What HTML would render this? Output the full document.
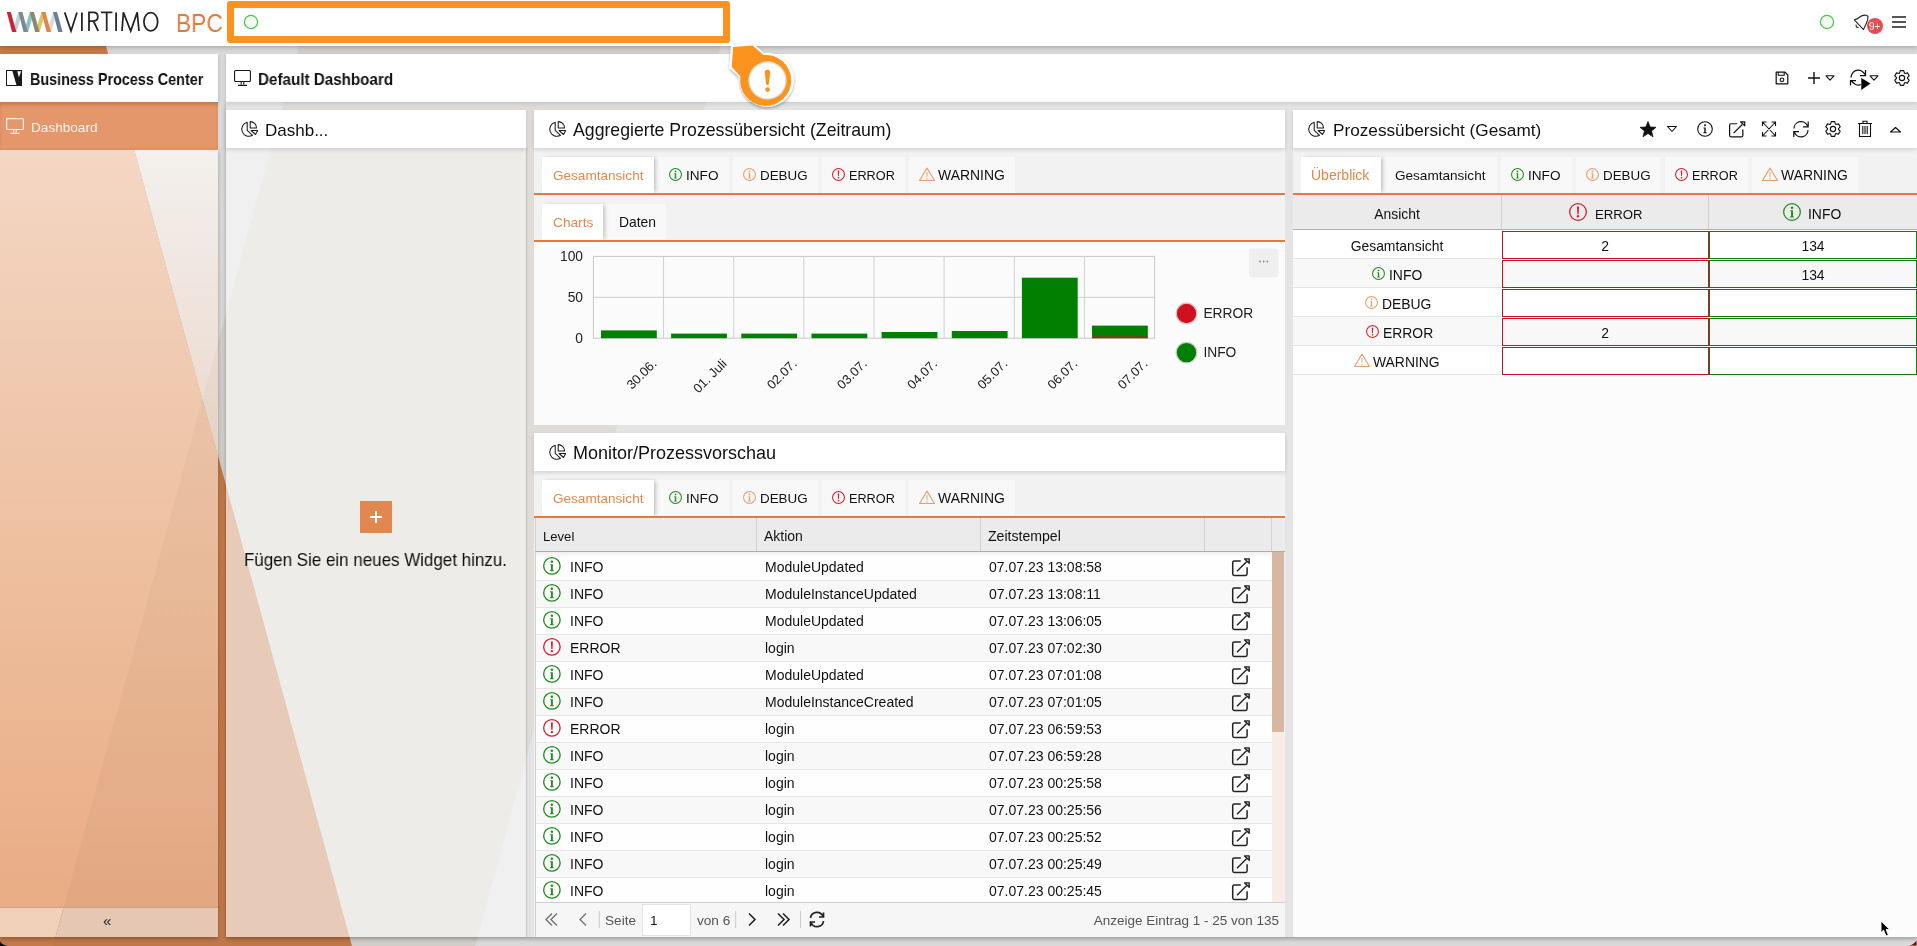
<!DOCTYPE html>
<html><head><meta charset="utf-8">
<style>
*{box-sizing:border-box;margin:0;padding:0}
html,body{width:1917px;height:946px;overflow:hidden;font-family:"Liberation Sans",sans-serif;color:#1a1a1a;background:#d9d9d9;-webkit-font-smoothing:antialiased}
.abs{position:absolute}
.t{position:absolute;white-space:nowrap;line-height:1;will-change:transform}
svg{display:block}
</style></head><body>
<svg class="abs" style="left:0;top:0" width="1917" height="946" viewBox="0 0 1917 946">
  <rect width="1917" height="946" fill="#d9d9d9"/>
  <polygon points="0,0 93.4,0 352,946 0,946" fill="#c67a4a"/>
  <polygon points="311.6,0 733.6,0 475,946 53,946" fill="rgb(150,110,60)" fill-opacity="0.1"/>
</svg>
<svg class="abs" style="left:0;top:0" width="218" height="946" viewBox="0 0 218 946">
  <defs>
    <linearGradient id="sgO" x1="0" y1="150" x2="0" y2="907" gradientUnits="userSpaceOnUse">
      <stop offset="0" stop-color="#f4d7c4"/>
      <stop offset="0.26" stop-color="#f0cbb3"/>
      <stop offset="0.55" stop-color="#eebf9e"/>
      <stop offset="1" stop-color="#e9ac85"/>
    </linearGradient>
    <linearGradient id="sgN" x1="0" y1="150" x2="0" y2="456" gradientUnits="userSpaceOnUse">
      <stop offset="0" stop-color="#f3f0ed"/>
      <stop offset="1" stop-color="#ebd8cc"/>
    </linearGradient>
  </defs>
  <polygon points="0,150 134.4,150 218,455.9 218,907 0,907" fill="url(#sgO)"/>
  <polygon points="134.4,150 218,150 218,455.9" fill="url(#sgN)"/>
  <polygon points="218,342.4 218,907 63.7,907" fill="rgb(90,60,30)" fill-opacity="0.035"/>
  <polygon points="0,907 63.7,907 55.5,937 0,937" fill="#f2d1ba"/>
  <polygon points="63.7,907 218,907 218,937 55.5,937" fill="#e5c7b3"/>
  <rect x="0" y="907" width="218" height="1" fill="#c9a58c"/>
</svg>
<div class="t" style="left:102.5px;top:913px;font-size:15px;color:#222;font-weight:normal;">&laquo;</div>
<div class="abs" style="left:0px;top:0px;width:1917px;height:46px;background:#fff;box-shadow:0 1px 5px rgba(0,0,0,.28)"></div>
<svg class="abs" style="left:0px;top:0px;overflow:visible" width="70" height="46" viewBox="0 0 70 46"><polygon points="12.10,32 16.50,32 22.55,12 18.35,12" fill="#bcd2d8"/><polygon points="23.65,32 28.05,32 34.10,12 29.90,12" fill="#8cc4c4"/><polygon points="35.20,32 39.60,32 45.65,12 41.45,12" fill="#d8c868"/><polygon points="46.75,32 51.15,32 57.20,12 53.00,12" fill="#dcdad4"/><polygon points="6.80,12 10.80,12 16.40,32 12.00,32" fill="#c8243a"/><polygon points="18.35,12 22.35,12 27.95,32 23.55,32" fill="#7a8a98"/><polygon points="29.90,12 33.90,12 39.50,32 35.10,32" fill="#8a8870"/><polygon points="41.45,12 45.45,12 51.05,32 46.65,32" fill="#e0884a"/><polygon points="53.00,12 57.00,12 62.60,32 58.20,32" fill="#6a7f9a"/></svg>
<svg class="abs" style="left:0px;top:0px;overflow:visible" width="170" height="46" viewBox="0 0 170 46"><path d="M64.7 12.4 L71 31 L77 12.4 M81.9 12.4 V31 M89 31 V12.4 H93.5 Q97.8 12.4 97.8 16.8 Q97.8 21 93.5 21 H89 M93.4 21 L98.3 31 M101 12.4 H112.4 M106.7 12.4 V31 M116.1 12.4 V31 M122 31 L123.4 12.4 L130.7 31 L137.2 12.4 L139 31" fill="none" stroke="#232323" stroke-width="1.75" stroke-linejoin="miter"/><ellipse cx="150.8" cy="21.7" rx="6.9" ry="9.2" fill="none" stroke="#232323" stroke-width="1.75"/></svg>
<div class="t" style="left:175.5px;top:10px;font-size:26px;color:#df7b3d;font-weight:normal;transform:scaleX(0.875);transform-origin:0 0">BPC</div>
<div class="abs" style="left:227px;top:1px;width:503px;height:42px;border:7px solid #fd931f;border-radius:3px;background:#fff"></div>
<svg class="abs" style="left:243px;top:14px;overflow:visible" width="16" height="16" viewBox="0 0 16 16"><circle cx="8" cy="8" r="7.5" fill="#5c5" fill-opacity="0.08"/><circle cx="8" cy="8" r="6.6" fill="none" stroke="#4cc34c" stroke-width="1.2"/></svg>
<svg class="abs" style="left:1819px;top:14px;overflow:visible" width="16" height="16" viewBox="0 0 16 16"><circle cx="8" cy="8" r="7.5" fill="#5c5" fill-opacity="0.08"/><circle cx="8" cy="8" r="6.6" fill="none" stroke="#4cc34c" stroke-width="1.2"/></svg>
<svg class="abs" style="left:1853px;top:14px;overflow:visible" width="18" height="18" viewBox="0 0 18 18"><path d="M1.3 5.8 Q4 5.4 6.8 3 Q9.8 0.6 13 1.2 L15 2.2 Q15.2 6 13.2 9.8 Q11.6 12.8 10.5 15.6 Z" fill="none" stroke="#222" stroke-width="1.1" stroke-linejoin="round"/><path d="M3.2 10.6 Q2.6 13.4 5.6 13.8" fill="none" stroke="#222" stroke-width="1.1"/></svg>
<svg class="abs" style="left:1867px;top:18px;overflow:visible" width="16" height="16" viewBox="0 0 16 16"><circle cx="8" cy="8" r="8" fill="#e84c52"/></svg>
<div class="t" style="left:1868.5px;top:22px;font-size:10px;color:#fff;font-weight:normal;">9+</div>
<div class="abs" style="left:1892px;top:16px;width:14px;height:2px;background:#555"></div>
<div class="abs" style="left:1892px;top:21px;width:14px;height:2px;background:#555"></div>
<div class="abs" style="left:1892px;top:26px;width:14px;height:2px;background:#555"></div>
<div class="abs" style="left:0px;top:54px;width:218px;height:48px;background:#fff;box-shadow:0 2px 4px rgba(0,0,0,.16)"></div>
<div class="abs" style="left:226px;top:54px;width:1691px;height:48px;background:#fff;box-shadow:0 2px 4px rgba(0,0,0,.16)"></div>
<svg class="abs" style="left:6px;top:70px;overflow:visible" width="16" height="16" viewBox="0 0 16 16"><rect x="0.5" y="0.5" width="15" height="15" fill="none" stroke="#1a1a1a" stroke-width="1"/><path d="M6.2 0.5 H15.5 V15.5 H10.6 Z M11.3 1.3 L15.1 1.3 L12.9 7.6 Z" fill="#1a1a1a" fill-rule="evenodd"/></svg>
<div class="t" style="left:30.4px;top:72px;font-size:16.6px;color:#111;font-weight:bold;transform:scaleX(0.866);transform-origin:0 0">Business Process Center</div>
<svg class="abs" style="left:234px;top:70px;overflow:visible" width="17" height="16" viewBox="0 0 17 16"><rect x="0.55" y="0.55" width="15.9" height="10.88" rx="1" fill="none" stroke="#1a1a1a" stroke-width="1.1"/><path d="M7.2 11.98 V14.5 M9.8 11.98 V14.5 M4.0 15.4 H13.0" stroke="#1a1a1a" stroke-width="1.1" fill="none"/></svg>
<div class="t" style="left:258.4px;top:72px;font-size:16.0px;color:#111;font-weight:bold;transform:scaleX(0.95);transform-origin:0 0">Default Dashboard</div>
<svg class="abs" style="left:1775px;top:71px;overflow:visible" width="14" height="14" viewBox="0 0 14 14"><path d="M1.2 1.2 H10 L12.8 4 V12.8 H1.2 Z" fill="none" stroke="#111" stroke-width="1.2" stroke-linejoin="round"/><path d="M3.2 1.2 V4.2 H9.2 V1.2" fill="none" stroke="#111" stroke-width="1.1"/><circle cx="7" cy="8.8" r="1.8" fill="none" stroke="#111" stroke-width="1.1"/></svg>
<svg class="abs" style="left:1808px;top:72px;overflow:visible" width="12" height="12" viewBox="0 0 12 12"><path d="M6 0 V12 M0 6 H12" stroke="#111" stroke-width="1.4"/></svg>
<svg class="abs" style="left:1825px;top:75px;overflow:visible" width="10" height="6" viewBox="0 0 10 6"><path d="M1 0.8 H9 L5 5.2 Z" fill="none" stroke="#111" stroke-width="1.1" stroke-linejoin="round"/></svg>
<svg class="abs" style="left:1850px;top:70px;overflow:visible" width="16" height="16" viewBox="0 0 16 16"><path d="M0.8 7.5 Q2.5 0.5 8 0.2 Q12 0 15 4.5 M15.5 0 V5.5 H10 M12 14 Q8.5 16 5.5 14.5 Q3 13 1 10.5 M0.5 15.5 V10.5 H6" fill="none" stroke="#111" stroke-width="1.25"/></svg>
<svg class="abs" style="left:1869px;top:75px;overflow:visible" width="10" height="6" viewBox="0 0 10 6"><path d="M1 0.8 H9 L5 5.2 Z" fill="none" stroke="#111" stroke-width="1.1" stroke-linejoin="round"/></svg>
<svg class="abs" style="left:1860px;top:77px;overflow:visible" width="12" height="14" viewBox="0 0 12 14"><path d="M1 0.5 L11 6.5 L1 13.5 Z" fill="#000" stroke="#fff" stroke-width="0.6"/></svg>
<svg class="abs" style="left:1894px;top:70px;overflow:visible" width="16" height="16" viewBox="0 0 16 16"><path d="M5.59 3.06 L6.31 0.69 L9.69 0.69 L10.41 3.06 L11.08 3.44 L13.49 2.89 L15.17 5.81 L13.49 7.62 L13.49 8.38 L15.17 10.19 L13.49 13.11 L11.08 12.56 L10.41 12.94 L9.69 15.31 L6.31 15.31 L5.59 12.94 L4.92 12.56 L2.51 13.11 L0.83 10.19 L2.51 8.38 L2.51 7.62 L0.83 5.81 L2.51 2.89 L4.92 3.44 Z" fill="none" stroke="#111" stroke-width="1.15" stroke-linejoin="round"/><circle cx="8.0" cy="8.0" r="2.64" fill="none" stroke="#111" stroke-width="1.15"/></svg>
<div class="abs" style="left:0px;top:102px;width:218px;height:48px;background:#e3976a;box-shadow:inset 0 4px 4px -2px rgba(110,50,10,.35)"></div>
<svg class="abs" style="left:6px;top:118px;overflow:visible" width="18" height="16" viewBox="0 0 18 16"><rect x="0.6" y="0.6" width="16.8" height="10.88" rx="1" fill="none" stroke="#fdf3ec" stroke-width="1.2"/><path d="M7.7 12.08 V14.5 M10.3 12.08 V14.5 M4.5 15.4 H13.5" stroke="#fdf3ec" stroke-width="1.2" fill="none"/></svg>
<div class="t" style="left:30.5px;top:121px;font-size:13.6px;color:#fdf3ec;font-weight:normal;">Dashboard</div>
<div class="abs" style="left:226px;top:102px;width:1691px;height:835px;background:rgba(255,255,255,.3);box-shadow:0 2px 4px rgba(0,0,0,.28)"></div>
<div class="abs" style="left:0px;top:150px;width:218px;height:787px;box-shadow:0 2px 4px rgba(0,0,0,.28)"></div>
<div class="abs" style="left:226px;top:148px;width:300px;height:789px;background:rgba(255,255,255,.45);box-shadow:1px 0 1px rgba(0,0,0,.12)"></div>
<div class="abs" style="left:226px;top:110px;width:300px;height:38px;background:#fff;box-shadow:0 2px 4px rgba(0,0,0,.13);z-index:1"></div>
<svg class="abs" style="z-index:2;left:241px;top:121px;overflow:visible" width="17" height="16" viewBox="0 0 17 16"><path d="M6.2 1.3 A7.1 7.1 0 1 0 11.5 14.3 L6.2 9.3 Z" fill="none" stroke="#1a1a1a" stroke-width="1.05" stroke-linejoin="round"/><path d="M9.2 0.6 V6.9 H15.5 A6.3 6.3 0 0 0 9.2 0.6 Z" fill="none" stroke="#1a1a1a" stroke-width="1.05" stroke-linejoin="round"/><path d="M10.1 9.5 H16.7 L14.5 13.5 Z" fill="none" stroke="#1a1a1a" stroke-width="1.05" stroke-linejoin="round"/></svg>
<div class="t" style="z-index:2;left:265.2px;top:122px;font-size:17.0px;color:#111;font-weight:normal;">Dashb...</div>
<div class="abs" style="left:360px;top:501px;width:32px;height:32px;background:#e0884f"></div>
<div class="abs" style="left:370px;top:516px;width:12px;height:1.6px;background:#fff"></div>
<div class="abs" style="left:375.2px;top:511px;width:1.6px;height:12px;background:#fff"></div>
<div class="t" style="left:244.0px;top:551px;font-size:18.2px;color:#111;font-weight:normal;transform:scaleX(0.932);transform-origin:0 0">Fügen Sie ein neues Widget hinzu.</div>
<div class="abs" style="left:534px;top:148px;width:751px;height:277px;background:#f2f2f2"></div>
<div class="abs" style="left:534px;top:110px;width:751px;height:38px;background:#fff;box-shadow:0 2px 4px rgba(0,0,0,.13);z-index:1"></div>
<svg class="abs" style="z-index:2;left:549px;top:121px;overflow:visible" width="17" height="16" viewBox="0 0 17 16"><path d="M6.2 1.3 A7.1 7.1 0 1 0 11.5 14.3 L6.2 9.3 Z" fill="none" stroke="#1a1a1a" stroke-width="1.05" stroke-linejoin="round"/><path d="M9.2 0.6 V6.9 H15.5 A6.3 6.3 0 0 0 9.2 0.6 Z" fill="none" stroke="#1a1a1a" stroke-width="1.05" stroke-linejoin="round"/><path d="M10.1 9.5 H16.7 L14.5 13.5 Z" fill="none" stroke="#1a1a1a" stroke-width="1.05" stroke-linejoin="round"/></svg>
<div class="t" style="z-index:2;left:573.4px;top:122px;font-size:17.7px;color:#111;font-weight:normal;">Aggregierte Prozessübersicht (Zeitraum)</div>
<div class="abs" style="left:534px;top:148px;width:751px;height:45px;background:#f2f2f2"></div>
<div class="abs" style="left:542px;top:157px;width:112px;height:36px;background:#fff;box-shadow:3px 0 4px -1px rgba(0,0,0,.2);z-index:1"></div>
<div class="t" style="z-index:2;left:552.5px;top:169px;font-size:13.57px;color:#e0884f;font-weight:normal;">Gesamtansicht</div>
<div class="abs" style="left:655px;top:157px;width:74px;height:36px;background:#f8f8f8"></div>
<svg class="abs" style="left:668.5px;top:168px;overflow:visible" width="13" height="13" viewBox="0 0 13 13"><circle cx="6.5" cy="6.5" r="5.95" fill="none" stroke="#228b22" stroke-width="1.1"/><circle cx="6.5" cy="3.4" r="0.9" fill="#228b22"/><path d="M5.3 5.3 H7.2 V9.7 H7.8 V10.4 H5.1 V9.7 H5.8 V6.0 H5.3 Z" fill="#228b22"/></svg>
<div class="t" style="left:685.5px;top:169px;font-size:13.6px;color:#111;font-weight:normal;">INFO</div>
<div class="abs" style="left:733px;top:157px;width:85px;height:36px;background:#f8f8f8"></div>
<svg class="abs" style="left:743px;top:168px;overflow:visible" width="13" height="13" viewBox="0 0 13 13"><circle cx="6.5" cy="6.5" r="5.95" fill="none" stroke="#e0a070" stroke-width="1.1"/><circle cx="6.5" cy="3.4" r="0.9" fill="#e0a070"/><path d="M5.3 5.3 H7.2 V9.7 H7.8 V10.4 H5.1 V9.7 H5.8 V6.0 H5.3 Z" fill="#e0a070"/></svg>
<div class="t" style="left:760.0px;top:169px;font-size:13.4px;color:#111;font-weight:normal;">DEBUG</div>
<div class="abs" style="left:822px;top:157px;width:83px;height:36px;background:#f8f8f8"></div>
<svg class="abs" style="left:832px;top:168px;overflow:visible" width="13" height="13" viewBox="0 0 13 13"><circle cx="6.5" cy="6.5" r="5.95" fill="none" stroke="#d0202e" stroke-width="1.1"/><path d="M5.75 2.5 H7.25 L6.95 8.1 H6.05 Z" fill="#d0202e"/><circle cx="6.5" cy="9.6" r="0.85" fill="#d0202e"/></svg>
<div class="t" style="left:849.0px;top:170px;font-size:12.7px;color:#111;font-weight:normal;">ERROR</div>
<div class="abs" style="left:909px;top:157px;width:106px;height:36px;background:#f8f8f8"></div>
<svg class="abs" style="left:919px;top:167px;overflow:visible" width="16" height="14" viewBox="0 0 16 14"><path d="M8.0 1.1 L15.45 13.45 H0.55 Z" fill="none" stroke="#e0a070" stroke-width="1.1" stroke-linejoin="round"/><path d="M7.4 5.32 H8.6 L8.35 10.08 H7.65 Z" fill="#e0a070"/><circle cx="8.0" cy="11.76" r="0.7" fill="#e0a070"/></svg>
<div class="t" style="left:938.0px;top:169px;font-size:13.95px;color:#111;font-weight:normal;">WARNING</div>
<div class="abs" style="left:534px;top:193px;width:751px;height:2px;background:#e07b40;z-index:3"></div>
<div class="abs" style="left:542px;top:204px;width:61px;height:36px;background:#fff;box-shadow:3px 0 4px -1px rgba(0,0,0,.2);z-index:1"></div>
<div class="t" style="z-index:2;left:552.5px;top:216px;font-size:13.7px;color:#e0884f;font-weight:normal;">Charts</div>
<div class="abs" style="left:603px;top:204px;width:63px;height:36px;background:#f8f8f8"></div>
<div class="t" style="left:618.5px;top:216px;font-size:13.9px;color:#111;font-weight:normal;">Daten</div>
<div class="abs" style="left:534px;top:240px;width:751px;height:2px;background:#e07b40;z-index:3"></div>
<div class="abs" style="left:534px;top:242px;width:751px;height:183px;background:rgba(251,251,251,.96)"></div>
<svg class="abs" style="left:0;top:0" width="1917" height="946" viewBox="0 0 1917 946"><rect x="593.4" y="256.4" width="561.2" height="81.8" fill="none" stroke="#c8c8c8" stroke-width="1"/><line x1="663.55" y1="256.4" x2="663.55" y2="338.2" stroke="#d0d0d0" stroke-width="1"/><line x1="733.7" y1="256.4" x2="733.7" y2="338.2" stroke="#d0d0d0" stroke-width="1"/><line x1="803.85" y1="256.4" x2="803.85" y2="338.2" stroke="#d0d0d0" stroke-width="1"/><line x1="874.0" y1="256.4" x2="874.0" y2="338.2" stroke="#d0d0d0" stroke-width="1"/><line x1="944.15" y1="256.4" x2="944.15" y2="338.2" stroke="#d0d0d0" stroke-width="1"/><line x1="1014.3" y1="256.4" x2="1014.3" y2="338.2" stroke="#d0d0d0" stroke-width="1"/><line x1="1084.45" y1="256.4" x2="1084.45" y2="338.2" stroke="#d0d0d0" stroke-width="1"/><line x1="593.4" y1="297.29999999999995" x2="1154.6" y2="297.29999999999995" stroke="#d0d0d0" stroke-width="1"/><rect x="601.0" y="330.4" width="55.8" height="7.8" fill="#007f00"/><rect x="671.1" y="333.6" width="55.8" height="4.6" fill="#007f00"/><rect x="741.3" y="333.6" width="55.8" height="4.6" fill="#007f00"/><rect x="811.5" y="333.6" width="55.8" height="4.6" fill="#007f00"/><rect x="881.6" y="332.0" width="55.8" height="6.2" fill="#007f00"/><rect x="951.8" y="331.0" width="55.8" height="7.2" fill="#007f00"/><rect x="1021.9" y="277.7" width="55.8" height="60.5" fill="#007f00"/><rect x="1092.0" y="325.6" width="55.8" height="12.6" fill="#007f00"/><rect x="1092.0" y="336.6" width="55.8" height="1.6" fill="#d0101e"/><text x="0" y="0" transform="translate(657.5,364.5) rotate(-45)" text-anchor="end" font-family="Liberation Sans" font-size="13" fill="#222">30.06.</text><text x="0" y="0" transform="translate(727.6,364.5) rotate(-45)" text-anchor="end" font-family="Liberation Sans" font-size="13" fill="#222">01. Juli</text><text x="0" y="0" transform="translate(797.8,364.5) rotate(-45)" text-anchor="end" font-family="Liberation Sans" font-size="13" fill="#222">02.07.</text><text x="0" y="0" transform="translate(867.9,364.5) rotate(-45)" text-anchor="end" font-family="Liberation Sans" font-size="13" fill="#222">03.07.</text><text x="0" y="0" transform="translate(938.1,364.5) rotate(-45)" text-anchor="end" font-family="Liberation Sans" font-size="13" fill="#222">04.07.</text><text x="0" y="0" transform="translate(1008.2,364.5) rotate(-45)" text-anchor="end" font-family="Liberation Sans" font-size="13" fill="#222">05.07.</text><text x="0" y="0" transform="translate(1078.4,364.5) rotate(-45)" text-anchor="end" font-family="Liberation Sans" font-size="13" fill="#222">06.07.</text><text x="0" y="0" transform="translate(1148.5,364.5) rotate(-45)" text-anchor="end" font-family="Liberation Sans" font-size="13" fill="#222">07.07.</text><text x="583" y="261.3" text-anchor="end" font-family="Liberation Sans" font-size="13.8" fill="#222">100</text><text x="583" y="302" text-anchor="end" font-family="Liberation Sans" font-size="13.8" fill="#222">50</text><text x="583" y="343" text-anchor="end" font-family="Liberation Sans" font-size="13.8" fill="#222">0</text><circle cx="1186.5" cy="313.5" r="10.3" fill="#d0101e" stroke="#ccc" stroke-width="1.2"/><circle cx="1186.5" cy="352.6" r="10.3" fill="#007f00" stroke="#ccc" stroke-width="1.2"/><text x="1203.4" y="317.7" font-family="Liberation Sans" font-size="13.8" fill="#222">ERROR</text><text x="1203.4" y="356.8" font-family="Liberation Sans" font-size="13.8" fill="#222">INFO</text><rect x="1249" y="248.4" width="29.4" height="29.2" rx="3" fill="#efefef"/><circle cx="1260" cy="261.5" r="0.9" fill="#888"/><circle cx="1263.7" cy="261.5" r="0.9" fill="#888"/><circle cx="1267.4" cy="261.5" r="0.9" fill="#888"/></svg>
<div class="abs" style="left:534px;top:471px;width:751px;height:466px;background:#f2f2f2"></div>
<div class="abs" style="left:534px;top:433px;width:751px;height:38px;background:#fff;box-shadow:0 2px 4px rgba(0,0,0,.13);z-index:1"></div>
<svg class="abs" style="z-index:2;left:549px;top:444px;overflow:visible" width="17" height="16" viewBox="0 0 17 16"><path d="M6.2 1.3 A7.1 7.1 0 1 0 11.5 14.3 L6.2 9.3 Z" fill="none" stroke="#1a1a1a" stroke-width="1.05" stroke-linejoin="round"/><path d="M9.2 0.6 V6.9 H15.5 A6.3 6.3 0 0 0 9.2 0.6 Z" fill="none" stroke="#1a1a1a" stroke-width="1.05" stroke-linejoin="round"/><path d="M10.1 9.5 H16.7 L14.5 13.5 Z" fill="none" stroke="#1a1a1a" stroke-width="1.05" stroke-linejoin="round"/></svg>
<div class="t" style="z-index:2;left:573.3px;top:444px;font-size:18.0px;color:#111;font-weight:normal;">Monitor/Prozessvorschau</div>
<div class="abs" style="left:534px;top:471px;width:751px;height:45px;background:#f2f2f2"></div>
<div class="abs" style="left:542px;top:480px;width:112px;height:36px;background:#fff;box-shadow:3px 0 4px -1px rgba(0,0,0,.2);z-index:1"></div>
<div class="t" style="z-index:2;left:552.5px;top:492px;font-size:13.57px;color:#e0884f;font-weight:normal;">Gesamtansicht</div>
<div class="abs" style="left:655px;top:480px;width:74px;height:36px;background:#f8f8f8"></div>
<svg class="abs" style="left:668.5px;top:491px;overflow:visible" width="13" height="13" viewBox="0 0 13 13"><circle cx="6.5" cy="6.5" r="5.95" fill="none" stroke="#228b22" stroke-width="1.1"/><circle cx="6.5" cy="3.4" r="0.9" fill="#228b22"/><path d="M5.3 5.3 H7.2 V9.7 H7.8 V10.4 H5.1 V9.7 H5.8 V6.0 H5.3 Z" fill="#228b22"/></svg>
<div class="t" style="left:685.5px;top:492px;font-size:13.6px;color:#111;font-weight:normal;">INFO</div>
<div class="abs" style="left:733px;top:480px;width:85px;height:36px;background:#f8f8f8"></div>
<svg class="abs" style="left:743px;top:491px;overflow:visible" width="13" height="13" viewBox="0 0 13 13"><circle cx="6.5" cy="6.5" r="5.95" fill="none" stroke="#e0a070" stroke-width="1.1"/><circle cx="6.5" cy="3.4" r="0.9" fill="#e0a070"/><path d="M5.3 5.3 H7.2 V9.7 H7.8 V10.4 H5.1 V9.7 H5.8 V6.0 H5.3 Z" fill="#e0a070"/></svg>
<div class="t" style="left:760.0px;top:492px;font-size:13.4px;color:#111;font-weight:normal;">DEBUG</div>
<div class="abs" style="left:822px;top:480px;width:83px;height:36px;background:#f8f8f8"></div>
<svg class="abs" style="left:832px;top:491px;overflow:visible" width="13" height="13" viewBox="0 0 13 13"><circle cx="6.5" cy="6.5" r="5.95" fill="none" stroke="#d0202e" stroke-width="1.1"/><path d="M5.75 2.5 H7.25 L6.95 8.1 H6.05 Z" fill="#d0202e"/><circle cx="6.5" cy="9.6" r="0.85" fill="#d0202e"/></svg>
<div class="t" style="left:849.0px;top:493px;font-size:12.7px;color:#111;font-weight:normal;">ERROR</div>
<div class="abs" style="left:909px;top:480px;width:106px;height:36px;background:#f8f8f8"></div>
<svg class="abs" style="left:919px;top:490px;overflow:visible" width="16" height="14" viewBox="0 0 16 14"><path d="M8.0 1.1 L15.45 13.45 H0.55 Z" fill="none" stroke="#e0a070" stroke-width="1.1" stroke-linejoin="round"/><path d="M7.4 5.32 H8.6 L8.35 10.08 H7.65 Z" fill="#e0a070"/><circle cx="8.0" cy="11.76" r="0.7" fill="#e0a070"/></svg>
<div class="t" style="left:938.0px;top:492px;font-size:13.95px;color:#111;font-weight:normal;">WARNING</div>
<div class="abs" style="left:534px;top:516px;width:751px;height:2px;background:#e07b40;z-index:3"></div>
<div class="abs" style="left:535px;top:518px;width:750px;height:34px;background:#ebebeb;border-bottom:1px solid #acacac;border-left:1px solid #d0d0d0"></div>
<div class="abs" style="left:756px;top:518px;width:1px;height:33px;background:#d2d2d2"></div>
<div class="abs" style="left:980px;top:518px;width:1px;height:33px;background:#d2d2d2"></div>
<div class="abs" style="left:1204px;top:518px;width:1px;height:33px;background:#d2d2d2"></div>
<div class="abs" style="left:1271px;top:518px;width:1px;height:33px;background:#d2d2d2"></div>
<div class="t" style="left:542.5px;top:530px;font-size:13.1px;color:#111;font-weight:normal;">Level</div>
<div class="t" style="left:764.0px;top:529px;font-size:14px;color:#111;font-weight:normal;">Aktion</div>
<div class="t" style="left:988.1px;top:529px;font-size:14.1px;color:#111;font-weight:normal;">Zeitstempel</div>
<div class="abs" style="left:535px;top:552px;width:737px;height:351px;background:#fff;border-left:1px solid #d0d0d0"></div>
<div class="abs" style="left:536px;top:554px;width:736px;height:27px;background:#fefefe;border-bottom:1px solid #e6e6e6"></div>
<svg class="abs" style="left:543.3px;top:557px;overflow:visible" width="17.8" height="17.8" viewBox="0 0 17.8 17.8"><circle cx="8.9" cy="8.9" r="8.225" fill="none" stroke="#228b22" stroke-width="1.35"/><circle cx="8.9" cy="4.655384615384616" r="1.2323076923076923" fill="#228b22"/><path d="M7.256923076923077 7.256923076923077 H9.858461538461539 V13.281538461538462 H10.68 V14.24 H6.983076923076924 V13.281538461538462 H7.941538461538462 V8.215384615384616 H7.256923076923077 Z" fill="#228b22"/></svg>
<div class="t" style="left:569.5px;top:560px;font-size:14px;color:#111;font-weight:normal;">INFO</div>
<div class="t" style="left:765.3px;top:560px;font-size:14px;color:#111;font-weight:normal;">ModuleUpdated</div>
<div class="t" style="left:988.8px;top:560px;font-size:14px;color:#111;font-weight:normal;">07.07.23 13:08:58</div>
<svg class="abs" style="left:1232px;top:558px;overflow:visible" width="18" height="18" viewBox="0 0 18 18"><path d="M8.8 3 H2.3 Q0.7 3 0.7 4.6 V15.8 Q0.7 17.4 2.3 17.4 H13.5 Q15.1 17.4 15.1 15.8 V9.2" fill="none" stroke="#222" stroke-width="1.5"/><path d="M5 13.2 L14.5 3.8" fill="none" stroke="#222" stroke-width="1.5"/><path d="M12.6 0.9 H17.2 V5.3 Z" fill="#222" fill-opacity="0.15" stroke="#222" stroke-width="1.4249999999999998" stroke-linejoin="round"/></svg>
<div class="abs" style="left:536px;top:581px;width:736px;height:27px;background:#f8f8f8;border-bottom:1px solid #e6e6e6"></div>
<svg class="abs" style="left:543.3px;top:584px;overflow:visible" width="17.8" height="17.8" viewBox="0 0 17.8 17.8"><circle cx="8.9" cy="8.9" r="8.225" fill="none" stroke="#228b22" stroke-width="1.35"/><circle cx="8.9" cy="4.655384615384616" r="1.2323076923076923" fill="#228b22"/><path d="M7.256923076923077 7.256923076923077 H9.858461538461539 V13.281538461538462 H10.68 V14.24 H6.983076923076924 V13.281538461538462 H7.941538461538462 V8.215384615384616 H7.256923076923077 Z" fill="#228b22"/></svg>
<div class="t" style="left:569.5px;top:587px;font-size:14px;color:#111;font-weight:normal;">INFO</div>
<div class="t" style="left:765.3px;top:587px;font-size:14px;color:#111;font-weight:normal;">ModuleInstanceUpdated</div>
<div class="t" style="left:988.8px;top:587px;font-size:14px;color:#111;font-weight:normal;">07.07.23 13:08:11</div>
<svg class="abs" style="left:1232px;top:585px;overflow:visible" width="18" height="18" viewBox="0 0 18 18"><path d="M8.8 3 H2.3 Q0.7 3 0.7 4.6 V15.8 Q0.7 17.4 2.3 17.4 H13.5 Q15.1 17.4 15.1 15.8 V9.2" fill="none" stroke="#222" stroke-width="1.5"/><path d="M5 13.2 L14.5 3.8" fill="none" stroke="#222" stroke-width="1.5"/><path d="M12.6 0.9 H17.2 V5.3 Z" fill="#222" fill-opacity="0.15" stroke="#222" stroke-width="1.4249999999999998" stroke-linejoin="round"/></svg>
<div class="abs" style="left:536px;top:608px;width:736px;height:27px;background:#fefefe;border-bottom:1px solid #e6e6e6"></div>
<svg class="abs" style="left:543.3px;top:611px;overflow:visible" width="17.8" height="17.8" viewBox="0 0 17.8 17.8"><circle cx="8.9" cy="8.9" r="8.225" fill="none" stroke="#228b22" stroke-width="1.35"/><circle cx="8.9" cy="4.655384615384616" r="1.2323076923076923" fill="#228b22"/><path d="M7.256923076923077 7.256923076923077 H9.858461538461539 V13.281538461538462 H10.68 V14.24 H6.983076923076924 V13.281538461538462 H7.941538461538462 V8.215384615384616 H7.256923076923077 Z" fill="#228b22"/></svg>
<div class="t" style="left:569.5px;top:614px;font-size:14px;color:#111;font-weight:normal;">INFO</div>
<div class="t" style="left:765.3px;top:614px;font-size:14px;color:#111;font-weight:normal;">ModuleUpdated</div>
<div class="t" style="left:988.8px;top:614px;font-size:14px;color:#111;font-weight:normal;">07.07.23 13:06:05</div>
<svg class="abs" style="left:1232px;top:612px;overflow:visible" width="18" height="18" viewBox="0 0 18 18"><path d="M8.8 3 H2.3 Q0.7 3 0.7 4.6 V15.8 Q0.7 17.4 2.3 17.4 H13.5 Q15.1 17.4 15.1 15.8 V9.2" fill="none" stroke="#222" stroke-width="1.5"/><path d="M5 13.2 L14.5 3.8" fill="none" stroke="#222" stroke-width="1.5"/><path d="M12.6 0.9 H17.2 V5.3 Z" fill="#222" fill-opacity="0.15" stroke="#222" stroke-width="1.4249999999999998" stroke-linejoin="round"/></svg>
<div class="abs" style="left:536px;top:635px;width:736px;height:27px;background:#f8f8f8;border-bottom:1px solid #e6e6e6"></div>
<svg class="abs" style="left:543.3px;top:638px;overflow:visible" width="17.8" height="17.8" viewBox="0 0 17.8 17.8"><circle cx="8.9" cy="8.9" r="8.225" fill="none" stroke="#d0202e" stroke-width="1.35"/><path d="M7.8730769230769235 3.4230769230769234 H9.926923076923078 L9.516153846153847 11.090769230769231 H8.283846153846154 Z" fill="#d0202e"/><circle cx="8.9" cy="13.144615384615385" r="1.1638461538461538" fill="#d0202e"/></svg>
<div class="t" style="left:569.5px;top:641px;font-size:14px;color:#111;font-weight:normal;">ERROR</div>
<div class="t" style="left:765.3px;top:641px;font-size:14px;color:#111;font-weight:normal;">login</div>
<div class="t" style="left:988.8px;top:641px;font-size:14px;color:#111;font-weight:normal;">07.07.23 07:02:30</div>
<svg class="abs" style="left:1232px;top:639px;overflow:visible" width="18" height="18" viewBox="0 0 18 18"><path d="M8.8 3 H2.3 Q0.7 3 0.7 4.6 V15.8 Q0.7 17.4 2.3 17.4 H13.5 Q15.1 17.4 15.1 15.8 V9.2" fill="none" stroke="#222" stroke-width="1.5"/><path d="M5 13.2 L14.5 3.8" fill="none" stroke="#222" stroke-width="1.5"/><path d="M12.6 0.9 H17.2 V5.3 Z" fill="#222" fill-opacity="0.15" stroke="#222" stroke-width="1.4249999999999998" stroke-linejoin="round"/></svg>
<div class="abs" style="left:536px;top:662px;width:736px;height:27px;background:#fefefe;border-bottom:1px solid #e6e6e6"></div>
<svg class="abs" style="left:543.3px;top:665px;overflow:visible" width="17.8" height="17.8" viewBox="0 0 17.8 17.8"><circle cx="8.9" cy="8.9" r="8.225" fill="none" stroke="#228b22" stroke-width="1.35"/><circle cx="8.9" cy="4.655384615384616" r="1.2323076923076923" fill="#228b22"/><path d="M7.256923076923077 7.256923076923077 H9.858461538461539 V13.281538461538462 H10.68 V14.24 H6.983076923076924 V13.281538461538462 H7.941538461538462 V8.215384615384616 H7.256923076923077 Z" fill="#228b22"/></svg>
<div class="t" style="left:569.5px;top:668px;font-size:14px;color:#111;font-weight:normal;">INFO</div>
<div class="t" style="left:765.3px;top:668px;font-size:14px;color:#111;font-weight:normal;">ModuleUpdated</div>
<div class="t" style="left:988.8px;top:668px;font-size:14px;color:#111;font-weight:normal;">07.07.23 07:01:08</div>
<svg class="abs" style="left:1232px;top:666px;overflow:visible" width="18" height="18" viewBox="0 0 18 18"><path d="M8.8 3 H2.3 Q0.7 3 0.7 4.6 V15.8 Q0.7 17.4 2.3 17.4 H13.5 Q15.1 17.4 15.1 15.8 V9.2" fill="none" stroke="#222" stroke-width="1.5"/><path d="M5 13.2 L14.5 3.8" fill="none" stroke="#222" stroke-width="1.5"/><path d="M12.6 0.9 H17.2 V5.3 Z" fill="#222" fill-opacity="0.15" stroke="#222" stroke-width="1.4249999999999998" stroke-linejoin="round"/></svg>
<div class="abs" style="left:536px;top:689px;width:736px;height:27px;background:#f8f8f8;border-bottom:1px solid #e6e6e6"></div>
<svg class="abs" style="left:543.3px;top:692px;overflow:visible" width="17.8" height="17.8" viewBox="0 0 17.8 17.8"><circle cx="8.9" cy="8.9" r="8.225" fill="none" stroke="#228b22" stroke-width="1.35"/><circle cx="8.9" cy="4.655384615384616" r="1.2323076923076923" fill="#228b22"/><path d="M7.256923076923077 7.256923076923077 H9.858461538461539 V13.281538461538462 H10.68 V14.24 H6.983076923076924 V13.281538461538462 H7.941538461538462 V8.215384615384616 H7.256923076923077 Z" fill="#228b22"/></svg>
<div class="t" style="left:569.5px;top:695px;font-size:14px;color:#111;font-weight:normal;">INFO</div>
<div class="t" style="left:765.3px;top:695px;font-size:14px;color:#111;font-weight:normal;">ModuleInstanceCreated</div>
<div class="t" style="left:988.8px;top:695px;font-size:14px;color:#111;font-weight:normal;">07.07.23 07:01:05</div>
<svg class="abs" style="left:1232px;top:693px;overflow:visible" width="18" height="18" viewBox="0 0 18 18"><path d="M8.8 3 H2.3 Q0.7 3 0.7 4.6 V15.8 Q0.7 17.4 2.3 17.4 H13.5 Q15.1 17.4 15.1 15.8 V9.2" fill="none" stroke="#222" stroke-width="1.5"/><path d="M5 13.2 L14.5 3.8" fill="none" stroke="#222" stroke-width="1.5"/><path d="M12.6 0.9 H17.2 V5.3 Z" fill="#222" fill-opacity="0.15" stroke="#222" stroke-width="1.4249999999999998" stroke-linejoin="round"/></svg>
<div class="abs" style="left:536px;top:716px;width:736px;height:27px;background:#fefefe;border-bottom:1px solid #e6e6e6"></div>
<svg class="abs" style="left:543.3px;top:719px;overflow:visible" width="17.8" height="17.8" viewBox="0 0 17.8 17.8"><circle cx="8.9" cy="8.9" r="8.225" fill="none" stroke="#d0202e" stroke-width="1.35"/><path d="M7.8730769230769235 3.4230769230769234 H9.926923076923078 L9.516153846153847 11.090769230769231 H8.283846153846154 Z" fill="#d0202e"/><circle cx="8.9" cy="13.144615384615385" r="1.1638461538461538" fill="#d0202e"/></svg>
<div class="t" style="left:569.5px;top:722px;font-size:14px;color:#111;font-weight:normal;">ERROR</div>
<div class="t" style="left:765.3px;top:722px;font-size:14px;color:#111;font-weight:normal;">login</div>
<div class="t" style="left:988.8px;top:722px;font-size:14px;color:#111;font-weight:normal;">07.07.23 06:59:53</div>
<svg class="abs" style="left:1232px;top:720px;overflow:visible" width="18" height="18" viewBox="0 0 18 18"><path d="M8.8 3 H2.3 Q0.7 3 0.7 4.6 V15.8 Q0.7 17.4 2.3 17.4 H13.5 Q15.1 17.4 15.1 15.8 V9.2" fill="none" stroke="#222" stroke-width="1.5"/><path d="M5 13.2 L14.5 3.8" fill="none" stroke="#222" stroke-width="1.5"/><path d="M12.6 0.9 H17.2 V5.3 Z" fill="#222" fill-opacity="0.15" stroke="#222" stroke-width="1.4249999999999998" stroke-linejoin="round"/></svg>
<div class="abs" style="left:536px;top:743px;width:736px;height:27px;background:#f8f8f8;border-bottom:1px solid #e6e6e6"></div>
<svg class="abs" style="left:543.3px;top:746px;overflow:visible" width="17.8" height="17.8" viewBox="0 0 17.8 17.8"><circle cx="8.9" cy="8.9" r="8.225" fill="none" stroke="#228b22" stroke-width="1.35"/><circle cx="8.9" cy="4.655384615384616" r="1.2323076923076923" fill="#228b22"/><path d="M7.256923076923077 7.256923076923077 H9.858461538461539 V13.281538461538462 H10.68 V14.24 H6.983076923076924 V13.281538461538462 H7.941538461538462 V8.215384615384616 H7.256923076923077 Z" fill="#228b22"/></svg>
<div class="t" style="left:569.5px;top:749px;font-size:14px;color:#111;font-weight:normal;">INFO</div>
<div class="t" style="left:765.3px;top:749px;font-size:14px;color:#111;font-weight:normal;">login</div>
<div class="t" style="left:988.8px;top:749px;font-size:14px;color:#111;font-weight:normal;">07.07.23 06:59:28</div>
<svg class="abs" style="left:1232px;top:747px;overflow:visible" width="18" height="18" viewBox="0 0 18 18"><path d="M8.8 3 H2.3 Q0.7 3 0.7 4.6 V15.8 Q0.7 17.4 2.3 17.4 H13.5 Q15.1 17.4 15.1 15.8 V9.2" fill="none" stroke="#222" stroke-width="1.5"/><path d="M5 13.2 L14.5 3.8" fill="none" stroke="#222" stroke-width="1.5"/><path d="M12.6 0.9 H17.2 V5.3 Z" fill="#222" fill-opacity="0.15" stroke="#222" stroke-width="1.4249999999999998" stroke-linejoin="round"/></svg>
<div class="abs" style="left:536px;top:770px;width:736px;height:27px;background:#fefefe;border-bottom:1px solid #e6e6e6"></div>
<svg class="abs" style="left:543.3px;top:773px;overflow:visible" width="17.8" height="17.8" viewBox="0 0 17.8 17.8"><circle cx="8.9" cy="8.9" r="8.225" fill="none" stroke="#228b22" stroke-width="1.35"/><circle cx="8.9" cy="4.655384615384616" r="1.2323076923076923" fill="#228b22"/><path d="M7.256923076923077 7.256923076923077 H9.858461538461539 V13.281538461538462 H10.68 V14.24 H6.983076923076924 V13.281538461538462 H7.941538461538462 V8.215384615384616 H7.256923076923077 Z" fill="#228b22"/></svg>
<div class="t" style="left:569.5px;top:776px;font-size:14px;color:#111;font-weight:normal;">INFO</div>
<div class="t" style="left:765.3px;top:776px;font-size:14px;color:#111;font-weight:normal;">login</div>
<div class="t" style="left:988.8px;top:776px;font-size:14px;color:#111;font-weight:normal;">07.07.23 00:25:58</div>
<svg class="abs" style="left:1232px;top:774px;overflow:visible" width="18" height="18" viewBox="0 0 18 18"><path d="M8.8 3 H2.3 Q0.7 3 0.7 4.6 V15.8 Q0.7 17.4 2.3 17.4 H13.5 Q15.1 17.4 15.1 15.8 V9.2" fill="none" stroke="#222" stroke-width="1.5"/><path d="M5 13.2 L14.5 3.8" fill="none" stroke="#222" stroke-width="1.5"/><path d="M12.6 0.9 H17.2 V5.3 Z" fill="#222" fill-opacity="0.15" stroke="#222" stroke-width="1.4249999999999998" stroke-linejoin="round"/></svg>
<div class="abs" style="left:536px;top:797px;width:736px;height:27px;background:#f8f8f8;border-bottom:1px solid #e6e6e6"></div>
<svg class="abs" style="left:543.3px;top:800px;overflow:visible" width="17.8" height="17.8" viewBox="0 0 17.8 17.8"><circle cx="8.9" cy="8.9" r="8.225" fill="none" stroke="#228b22" stroke-width="1.35"/><circle cx="8.9" cy="4.655384615384616" r="1.2323076923076923" fill="#228b22"/><path d="M7.256923076923077 7.256923076923077 H9.858461538461539 V13.281538461538462 H10.68 V14.24 H6.983076923076924 V13.281538461538462 H7.941538461538462 V8.215384615384616 H7.256923076923077 Z" fill="#228b22"/></svg>
<div class="t" style="left:569.5px;top:803px;font-size:14px;color:#111;font-weight:normal;">INFO</div>
<div class="t" style="left:765.3px;top:803px;font-size:14px;color:#111;font-weight:normal;">login</div>
<div class="t" style="left:988.8px;top:803px;font-size:14px;color:#111;font-weight:normal;">07.07.23 00:25:56</div>
<svg class="abs" style="left:1232px;top:801px;overflow:visible" width="18" height="18" viewBox="0 0 18 18"><path d="M8.8 3 H2.3 Q0.7 3 0.7 4.6 V15.8 Q0.7 17.4 2.3 17.4 H13.5 Q15.1 17.4 15.1 15.8 V9.2" fill="none" stroke="#222" stroke-width="1.5"/><path d="M5 13.2 L14.5 3.8" fill="none" stroke="#222" stroke-width="1.5"/><path d="M12.6 0.9 H17.2 V5.3 Z" fill="#222" fill-opacity="0.15" stroke="#222" stroke-width="1.4249999999999998" stroke-linejoin="round"/></svg>
<div class="abs" style="left:536px;top:824px;width:736px;height:27px;background:#fefefe;border-bottom:1px solid #e6e6e6"></div>
<svg class="abs" style="left:543.3px;top:827px;overflow:visible" width="17.8" height="17.8" viewBox="0 0 17.8 17.8"><circle cx="8.9" cy="8.9" r="8.225" fill="none" stroke="#228b22" stroke-width="1.35"/><circle cx="8.9" cy="4.655384615384616" r="1.2323076923076923" fill="#228b22"/><path d="M7.256923076923077 7.256923076923077 H9.858461538461539 V13.281538461538462 H10.68 V14.24 H6.983076923076924 V13.281538461538462 H7.941538461538462 V8.215384615384616 H7.256923076923077 Z" fill="#228b22"/></svg>
<div class="t" style="left:569.5px;top:830px;font-size:14px;color:#111;font-weight:normal;">INFO</div>
<div class="t" style="left:765.3px;top:830px;font-size:14px;color:#111;font-weight:normal;">login</div>
<div class="t" style="left:988.8px;top:830px;font-size:14px;color:#111;font-weight:normal;">07.07.23 00:25:52</div>
<svg class="abs" style="left:1232px;top:828px;overflow:visible" width="18" height="18" viewBox="0 0 18 18"><path d="M8.8 3 H2.3 Q0.7 3 0.7 4.6 V15.8 Q0.7 17.4 2.3 17.4 H13.5 Q15.1 17.4 15.1 15.8 V9.2" fill="none" stroke="#222" stroke-width="1.5"/><path d="M5 13.2 L14.5 3.8" fill="none" stroke="#222" stroke-width="1.5"/><path d="M12.6 0.9 H17.2 V5.3 Z" fill="#222" fill-opacity="0.15" stroke="#222" stroke-width="1.4249999999999998" stroke-linejoin="round"/></svg>
<div class="abs" style="left:536px;top:851px;width:736px;height:27px;background:#f8f8f8;border-bottom:1px solid #e6e6e6"></div>
<svg class="abs" style="left:543.3px;top:854px;overflow:visible" width="17.8" height="17.8" viewBox="0 0 17.8 17.8"><circle cx="8.9" cy="8.9" r="8.225" fill="none" stroke="#228b22" stroke-width="1.35"/><circle cx="8.9" cy="4.655384615384616" r="1.2323076923076923" fill="#228b22"/><path d="M7.256923076923077 7.256923076923077 H9.858461538461539 V13.281538461538462 H10.68 V14.24 H6.983076923076924 V13.281538461538462 H7.941538461538462 V8.215384615384616 H7.256923076923077 Z" fill="#228b22"/></svg>
<div class="t" style="left:569.5px;top:857px;font-size:14px;color:#111;font-weight:normal;">INFO</div>
<div class="t" style="left:765.3px;top:857px;font-size:14px;color:#111;font-weight:normal;">login</div>
<div class="t" style="left:988.8px;top:857px;font-size:14px;color:#111;font-weight:normal;">07.07.23 00:25:49</div>
<svg class="abs" style="left:1232px;top:855px;overflow:visible" width="18" height="18" viewBox="0 0 18 18"><path d="M8.8 3 H2.3 Q0.7 3 0.7 4.6 V15.8 Q0.7 17.4 2.3 17.4 H13.5 Q15.1 17.4 15.1 15.8 V9.2" fill="none" stroke="#222" stroke-width="1.5"/><path d="M5 13.2 L14.5 3.8" fill="none" stroke="#222" stroke-width="1.5"/><path d="M12.6 0.9 H17.2 V5.3 Z" fill="#222" fill-opacity="0.15" stroke="#222" stroke-width="1.4249999999999998" stroke-linejoin="round"/></svg>
<div class="abs" style="left:536px;top:878px;width:736px;height:24px;background:#fefefe;border-bottom:0"></div>
<svg class="abs" style="left:543.3px;top:881px;overflow:visible" width="17.8" height="17.8" viewBox="0 0 17.8 17.8"><circle cx="8.9" cy="8.9" r="8.225" fill="none" stroke="#228b22" stroke-width="1.35"/><circle cx="8.9" cy="4.655384615384616" r="1.2323076923076923" fill="#228b22"/><path d="M7.256923076923077 7.256923076923077 H9.858461538461539 V13.281538461538462 H10.68 V14.24 H6.983076923076924 V13.281538461538462 H7.941538461538462 V8.215384615384616 H7.256923076923077 Z" fill="#228b22"/></svg>
<div class="t" style="left:569.5px;top:884px;font-size:14px;color:#111;font-weight:normal;">INFO</div>
<div class="t" style="left:765.3px;top:884px;font-size:14px;color:#111;font-weight:normal;">login</div>
<div class="t" style="left:988.8px;top:884px;font-size:14px;color:#111;font-weight:normal;">07.07.23 00:25:45</div>
<svg class="abs" style="left:1232px;top:882px;overflow:visible" width="18" height="18" viewBox="0 0 18 18"><path d="M8.8 3 H2.3 Q0.7 3 0.7 4.6 V15.8 Q0.7 17.4 2.3 17.4 H13.5 Q15.1 17.4 15.1 15.8 V9.2" fill="none" stroke="#222" stroke-width="1.5"/><path d="M5 13.2 L14.5 3.8" fill="none" stroke="#222" stroke-width="1.5"/><path d="M12.6 0.9 H17.2 V5.3 Z" fill="#222" fill-opacity="0.15" stroke="#222" stroke-width="1.4249999999999998" stroke-linejoin="round"/></svg>
<div class="abs" style="left:536px;top:552px;width:736px;height:6px;background:linear-gradient(rgba(0,0,0,.06),rgba(0,0,0,0))"></div>
<div class="abs" style="left:1272px;top:552px;width:12px;height:351px;background:#f8ece7"></div>
<div class="abs" style="left:1272px;top:552px;width:12px;height:180px;background:#d7b7a3"></div>
<div class="abs" style="left:535px;top:902px;width:750px;height:35px;background:#f6f6f6;border-top:1px solid #cfcfcf;border-left:1px solid #d0d0d0"></div>
<svg class="abs" style="left:0;top:0" width="1917" height="946" viewBox="0 0 1917 946"><path d="M552 913.5 L546 919.5 L552 925.5 M557 913.5 L551 919.5 L557 925.5" fill="none" stroke="#777" stroke-width="1.5"/><path d="M586 913.5 L580 919.5 L586 925.5" fill="none" stroke="#777" stroke-width="1.5"/><line x1="599.3" y1="911" x2="599.3" y2="928" stroke="#ccc" stroke-width="1"/><line x1="735.6" y1="911" x2="735.6" y2="928" stroke="#ccc" stroke-width="1"/><line x1="800.5" y1="911" x2="800.5" y2="928" stroke="#ccc" stroke-width="1"/><path d="M749 913.5 L755 919.5 L749 925.5" fill="none" stroke="#222" stroke-width="1.6"/><path d="M778 913.5 L784 919.5 L778 925.5 M783 913.5 L789 919.5 L783 925.5" fill="none" stroke="#222" stroke-width="1.6"/><path d="M810.5 918 A6.5 6.5 0 0 1 823 916.5 M823.5 912.5 V917 H819 M823.5 921 A6.5 6.5 0 0 1 811 922.5 M810.5 926.5 V922 H815" fill="none" stroke="#222" stroke-width="1.7"/></svg>
<div class="t" style="left:604.5px;top:914px;font-size:13.6px;color:#555;font-weight:normal;">Seite</div>
<div class="abs" style="left:641.5px;top:904px;width:49.5px;height:31.5px;background:#fff;border:1px solid #e2e2e2"></div>
<div class="t" style="left:650.0px;top:914px;font-size:13.6px;color:#111;font-weight:normal;">1</div>
<div class="t" style="left:697.0px;top:914px;font-size:13.6px;color:#555;font-weight:normal;">von 6</div>
<div class="t" style="left:879.3px;width:400px;text-align:right;top:914px;font-size:13.5px;color:#555;font-weight:normal">Anzeige Eintrag 1 - 25 von 135</div>
<div class="abs" style="left:1293px;top:148px;width:624px;height:789px;background:rgba(252,252,252,.97)"></div>
<div class="abs" style="left:1293px;top:110px;width:624px;height:38px;background:#fff;box-shadow:0 2px 4px rgba(0,0,0,.13);z-index:1"></div>
<svg class="abs" style="z-index:2;left:1308px;top:121px;overflow:visible" width="17" height="16" viewBox="0 0 17 16"><path d="M6.2 1.3 A7.1 7.1 0 1 0 11.5 14.3 L6.2 9.3 Z" fill="none" stroke="#1a1a1a" stroke-width="1.05" stroke-linejoin="round"/><path d="M9.2 0.6 V6.9 H15.5 A6.3 6.3 0 0 0 9.2 0.6 Z" fill="none" stroke="#1a1a1a" stroke-width="1.05" stroke-linejoin="round"/><path d="M10.1 9.5 H16.7 L14.5 13.5 Z" fill="none" stroke="#1a1a1a" stroke-width="1.05" stroke-linejoin="round"/></svg>
<div class="t" style="z-index:2;left:1333.2px;top:122px;font-size:17.2px;color:#111;font-weight:normal;">Prozessübersicht (Gesamt)</div>
<svg class="abs" style="left:0;top:0;z-index:2" width="1917" height="946" viewBox="0 0 1917 946"><path d="M1648 121.5 L1650.2 127 L1656 127.3 L1651.5 131 L1653 136.8 L1648 133.5 L1643 136.8 L1644.5 131 L1640 127.3 L1645.8 127 Z" fill="#111" stroke="#111" stroke-width="0.8" stroke-linejoin="round"/><path d="M1667.5 126.5 H1676.5 L1672 131.5 Z" fill="none" stroke="#111" stroke-width="1.1" stroke-linejoin="round"/><circle cx="1705" cy="129" r="7.3" fill="none" stroke="#111" stroke-width="1.1"/><circle cx="1705" cy="125.3" r="1" fill="#111"/><path d="M1703.6 127.5 H1705.7 V132.3 H1706.6 V133.2 H1703.4 V132.3 H1704.3 V128.4 H1703.6 Z" fill="#111"/><path d="M1762.5 122 L1775.5 136 M1775.5 122 L1762.5 136 M1762.5 126 V122 H1766.5 M1771.5 122 H1775.5 V126 M1775.5 132 V136 H1771.5 M1766.5 136 H1762.5 V132" fill="none" stroke="#111" stroke-width="1.1"/><path d="M1794 128.5 A7 7 0 0 1 1807.5 126 M1808.2 121.5 V126.8 H1803 M1808 130 A7 7 0 0 1 1794.5 132.5 M1793.8 137 V131.7 H1799" fill="none" stroke="#111" stroke-width="1.2"/><path d="M1858 123.5 H1872 M1863 123.5 V121.3 H1867 V123.5 M1859.5 123.5 V136.5 H1870.5 V123.5 M1862.8 126 V134 M1865 126 V134 M1867.2 126 V134" fill="none" stroke="#111" stroke-width="1.1"/><path d="M1890.5 132 H1900.5 L1895.5 127.5 Z" fill="none" stroke="#111" stroke-width="1.2" stroke-linejoin="round"/></svg>
<svg class="abs" style="z-index:2;left:1825px;top:121px;overflow:visible" width="16" height="16" viewBox="0 0 16 16"><path d="M5.59 3.06 L6.31 0.69 L9.69 0.69 L10.41 3.06 L11.08 3.44 L13.49 2.89 L15.17 5.81 L13.49 7.62 L13.49 8.38 L15.17 10.19 L13.49 13.11 L11.08 12.56 L10.41 12.94 L9.69 15.31 L6.31 15.31 L5.59 12.94 L4.92 12.56 L2.51 13.11 L0.83 10.19 L2.51 8.38 L2.51 7.62 L0.83 5.81 L2.51 2.89 L4.92 3.44 Z" fill="none" stroke="#111" stroke-width="1.15" stroke-linejoin="round"/><circle cx="8.0" cy="8.0" r="2.64" fill="none" stroke="#111" stroke-width="1.15"/></svg>
<svg class="abs" style="z-index:2;left:1729px;top:120.5px;overflow:visible" width="16.5" height="16.5" viewBox="0 0 18 18"><path d="M8.8 3 H2.3 Q0.7 3 0.7 4.6 V15.8 Q0.7 17.4 2.3 17.4 H13.5 Q15.1 17.4 15.1 15.8 V9.2" fill="none" stroke="#111" stroke-width="1.35"/><path d="M5 13.2 L14.5 3.8" fill="none" stroke="#111" stroke-width="1.35"/><path d="M12.6 0.9 H17.2 V5.3 Z" fill="#111" fill-opacity="0.15" stroke="#111" stroke-width="1.2825" stroke-linejoin="round"/></svg>
<div class="abs" style="left:1293px;top:148px;width:624px;height:45px;background:#f2f2f2"></div>
<div class="abs" style="left:1301px;top:157px;width:80px;height:36px;background:#fff;box-shadow:3px 0 4px -1px rgba(0,0,0,.2);z-index:1"></div>
<div class="t" style="z-index:2;left:1311.2px;top:168px;font-size:14.0px;color:#e0884f;font-weight:normal;">Überblick</div>
<div class="abs" style="left:1382px;top:157px;width:115px;height:36px;background:#f8f8f8"></div>
<div class="t" style="left:1395.0px;top:169px;font-size:13.57px;color:#111;font-weight:normal;">Gesamtansicht</div>
<div class="abs" style="left:1501px;top:157px;width:71px;height:36px;background:#f8f8f8"></div>
<svg class="abs" style="left:1510.9px;top:168px;overflow:visible" width="13" height="13" viewBox="0 0 13 13"><circle cx="6.5" cy="6.5" r="5.95" fill="none" stroke="#228b22" stroke-width="1.1"/><circle cx="6.5" cy="3.4" r="0.9" fill="#228b22"/><path d="M5.3 5.3 H7.2 V9.7 H7.8 V10.4 H5.1 V9.7 H5.8 V6.0 H5.3 Z" fill="#228b22"/></svg>
<div class="t" style="left:1527.9px;top:169px;font-size:13.6px;color:#111;font-weight:normal;">INFO</div>
<div class="abs" style="left:1576px;top:157px;width:84px;height:36px;background:#f8f8f8"></div>
<svg class="abs" style="left:1586.2px;top:168px;overflow:visible" width="13" height="13" viewBox="0 0 13 13"><circle cx="6.5" cy="6.5" r="5.95" fill="none" stroke="#e0a070" stroke-width="1.1"/><circle cx="6.5" cy="3.4" r="0.9" fill="#e0a070"/><path d="M5.3 5.3 H7.2 V9.7 H7.8 V10.4 H5.1 V9.7 H5.8 V6.0 H5.3 Z" fill="#e0a070"/></svg>
<div class="t" style="left:1603.2px;top:169px;font-size:13.4px;color:#111;font-weight:normal;">DEBUG</div>
<div class="abs" style="left:1665px;top:157px;width:83px;height:36px;background:#f8f8f8"></div>
<svg class="abs" style="left:1675px;top:168px;overflow:visible" width="13" height="13" viewBox="0 0 13 13"><circle cx="6.5" cy="6.5" r="5.95" fill="none" stroke="#d0202e" stroke-width="1.1"/><path d="M5.75 2.5 H7.25 L6.95 8.1 H6.05 Z" fill="#d0202e"/><circle cx="6.5" cy="9.6" r="0.85" fill="#d0202e"/></svg>
<div class="t" style="left:1692.0px;top:170px;font-size:12.7px;color:#111;font-weight:normal;">ERROR</div>
<div class="abs" style="left:1752px;top:157px;width:106px;height:36px;background:#f8f8f8"></div>
<svg class="abs" style="left:1762px;top:167px;overflow:visible" width="16" height="14" viewBox="0 0 16 14"><path d="M8.0 1.1 L15.45 13.45 H0.55 Z" fill="none" stroke="#e0a070" stroke-width="1.1" stroke-linejoin="round"/><path d="M7.4 5.32 H8.6 L8.35 10.08 H7.65 Z" fill="#e0a070"/><circle cx="8.0" cy="11.76" r="0.7" fill="#e0a070"/></svg>
<div class="t" style="left:1781.0px;top:169px;font-size:13.95px;color:#111;font-weight:normal;">WARNING</div>
<div class="abs" style="left:1293px;top:193px;width:624px;height:2px;background:#e07b40;z-index:3"></div>
<div class="abs" style="left:1293px;top:195px;width:624px;height:35px;background:#ebebeb;border-bottom:1px solid #b0b0b0"></div>
<div class="abs" style="left:1501px;top:195px;width:1px;height:34px;background:#d0d0d0"></div>
<div class="abs" style="left:1708px;top:195px;width:1px;height:34px;background:#d0d0d0"></div>
<div class="t" style="left:1297.0px;width:200px;text-align:center;top:208px;font-size:13.9px;color:#111;font-weight:normal">Ansicht</div>
<svg class="abs" style="left:1569px;top:203px;overflow:visible" width="18" height="18" viewBox="0 0 18 18"><circle cx="9.0" cy="9.0" r="8.35" fill="none" stroke="#d0202e" stroke-width="1.3"/><path d="M7.961538461538462 3.4615384615384617 H10.038461538461538 L9.623076923076923 11.215384615384615 H8.376923076923077 Z" fill="#d0202e"/><circle cx="9.0" cy="13.292307692307691" r="1.176923076923077" fill="#d0202e"/></svg>
<div class="t" style="left:1595.0px;top:208px;font-size:13.2px;color:#111;font-weight:normal;">ERROR</div>
<svg class="abs" style="left:1782.5px;top:203px;overflow:visible" width="18" height="18" viewBox="0 0 18 18"><circle cx="9.0" cy="9.0" r="8.35" fill="none" stroke="#228b22" stroke-width="1.3"/><circle cx="9.0" cy="4.707692307692308" r="1.2461538461538462" fill="#228b22"/><path d="M7.338461538461539 7.338461538461539 H9.96923076923077 V13.430769230769231 H10.8 V14.399999999999999 H7.061538461538461 V13.430769230769231 H8.03076923076923 V8.307692307692308 H7.338461538461539 Z" fill="#228b22"/></svg>
<div class="t" style="left:1808.0px;top:208px;font-size:13.9px;color:#111;font-weight:normal;">INFO</div>
<div class="abs" style="left:1293px;top:230px;width:208px;height:29px;background:#fff;border-bottom:1px solid #e4e4e4"></div>
<div class="abs" style="left:1502px;top:231px;width:207px;height:28px;background:#fff;border:1.6px solid #c8102e"></div>
<div class="abs" style="left:1709px;top:231px;width:208px;height:28px;background:#fff;border:1.6px solid #107c10"></div>
<div class="t" style="left:1297.0px;width:200px;text-align:center;top:240px;font-size:13.9px;color:#111;font-weight:normal">Gesamtansicht</div>
<div class="t" style="left:1555.0px;width:100px;text-align:center;top:240px;font-size:13.9px;color:#111;font-weight:normal">2</div>
<div class="t" style="left:1762.5px;width:100px;text-align:center;top:240px;font-size:13.9px;color:#111;font-weight:normal">134</div>
<div class="abs" style="left:1293px;top:259px;width:208px;height:29px;background:#f8f8f8;border-bottom:1px solid #e4e4e4"></div>
<div class="abs" style="left:1502px;top:260px;width:207px;height:28px;background:#f8f8f8;border:1.6px solid #c8102e"></div>
<div class="abs" style="left:1709px;top:260px;width:208px;height:28px;background:#f8f8f8;border:1.6px solid #107c10"></div>
<svg class="abs" style="left:1371.75px;top:267px;overflow:visible" width="13" height="13" viewBox="0 0 13 13"><circle cx="6.5" cy="6.5" r="5.95" fill="none" stroke="#228b22" stroke-width="1.1"/><circle cx="6.5" cy="3.4" r="0.9" fill="#228b22"/><path d="M5.3 5.3 H7.2 V9.7 H7.8 V10.4 H5.1 V9.7 H5.8 V6.0 H5.3 Z" fill="#228b22"/></svg>
<div class="t" style="left:1388.8px;top:269px;font-size:13.9px;color:#111;font-weight:normal;">INFO</div>
<div class="t" style="left:1762.5px;width:100px;text-align:center;top:269px;font-size:13.9px;color:#111;font-weight:normal">134</div>
<div class="abs" style="left:1293px;top:288px;width:208px;height:29px;background:#fff;border-bottom:1px solid #e4e4e4"></div>
<div class="abs" style="left:1502px;top:289px;width:207px;height:28px;background:#fff;border:1.6px solid #c8102e"></div>
<div class="abs" style="left:1709px;top:289px;width:208px;height:28px;background:#fff;border:1.6px solid #107c10"></div>
<svg class="abs" style="left:1364.5px;top:296px;overflow:visible" width="13" height="13" viewBox="0 0 13 13"><circle cx="6.5" cy="6.5" r="5.95" fill="none" stroke="#e0a070" stroke-width="1.1"/><circle cx="6.5" cy="3.4" r="0.9" fill="#e0a070"/><path d="M5.3 5.3 H7.2 V9.7 H7.8 V10.4 H5.1 V9.7 H5.8 V6.0 H5.3 Z" fill="#e0a070"/></svg>
<div class="t" style="left:1381.5px;top:298px;font-size:13.9px;color:#111;font-weight:normal;">DEBUG</div>
<div class="abs" style="left:1293px;top:317px;width:208px;height:29px;background:#f8f8f8;border-bottom:1px solid #e4e4e4"></div>
<div class="abs" style="left:1502px;top:318px;width:207px;height:28px;background:#f8f8f8;border:1.6px solid #c8102e"></div>
<div class="abs" style="left:1709px;top:318px;width:208px;height:28px;background:#f8f8f8;border:1.6px solid #107c10"></div>
<svg class="abs" style="left:1365.75px;top:325px;overflow:visible" width="13" height="13" viewBox="0 0 13 13"><circle cx="6.5" cy="6.5" r="5.95" fill="none" stroke="#d0202e" stroke-width="1.1"/><path d="M5.75 2.5 H7.25 L6.95 8.1 H6.05 Z" fill="#d0202e"/><circle cx="6.5" cy="9.6" r="0.85" fill="#d0202e"/></svg>
<div class="t" style="left:1382.8px;top:327px;font-size:13.9px;color:#111;font-weight:normal;">ERROR</div>
<div class="t" style="left:1555.0px;width:100px;text-align:center;top:327px;font-size:13.9px;color:#111;font-weight:normal">2</div>
<div class="abs" style="left:1293px;top:346px;width:208px;height:29px;background:#fff;border-bottom:1px solid #e4e4e4"></div>
<div class="abs" style="left:1502px;top:347px;width:207px;height:28px;background:#fff;border:1.6px solid #c8102e"></div>
<div class="abs" style="left:1709px;top:347px;width:208px;height:28px;background:#fff;border:1.6px solid #107c10"></div>
<svg class="abs" style="left:1354.0px;top:353px;overflow:visible" width="16" height="14" viewBox="0 0 16 14"><path d="M8.0 1.1 L15.45 13.45 H0.55 Z" fill="none" stroke="#e0a070" stroke-width="1.1" stroke-linejoin="round"/><path d="M7.4 5.32 H8.6 L8.35 10.08 H7.65 Z" fill="#e0a070"/><circle cx="8.0" cy="11.76" r="0.7" fill="#e0a070"/></svg>
<div class="t" style="left:1373.0px;top:356px;font-size:13.9px;color:#111;font-weight:normal;">WARNING</div>
<svg class="abs" style="left:1880px;top:920px;overflow:visible" width="14" height="20" viewBox="0 0 14 20"><path d="M1 1 L1 12.5 L3.6 10.2 L6 16 L8.4 15 L6.1 9.6 L9.8 9.6 Z" fill="#000" stroke="#fff" stroke-width="0.9" stroke-linejoin="round"/></svg>
<svg class="abs" style="left:0px;top:936px;overflow:visible" width="20" height="10" viewBox="0 0 20 10"><path d="M0 10 V5.5 Q2.5 9 7.5 10 Z" fill="#02080c"/></svg>
<svg class="abs" style="left:1897px;top:936px;overflow:visible" width="20" height="10" viewBox="0 0 20 10"><path d="M20 10 V3.5 Q17 8.5 10 10 Z" fill="#5a1508" stroke="#eee" stroke-width="0.8"/></svg>
<svg class="abs" style="left:722px;top:40px;overflow:visible" width="80" height="80" viewBox="722 40 80 80">
<defs><filter id="sh" x="-30%" y="-30%" width="160%" height="160%"><feDropShadow dx="0" dy="1.5" stdDeviation="1.5" flood-color="#000" flood-opacity="0.35"/></filter></defs>
<g filter="url(#sh)">
<path d="M731 45.5 L753 43.5 L764 53 A27 27 0 1 1 740 77.5 L729.5 68 Z" fill="#fff"/>
</g>
<path d="M733 47 L752.5 45.5 L763.5 55 A25.5 25.5 0 1 1 740.5 76.5 L731.8 67 Z" fill="#fd931f"/>
<circle cx="767.5" cy="80.5" r="19" fill="#fff"/>
<circle cx="767.5" cy="80.5" r="18.4" fill="none" stroke="#bbb" stroke-width="1.2" stroke-opacity="0.5"/>
<path d="M764.7 72.3 Q764.6 69.8 767.5 69.8 Q770.4 69.8 770.3 72.3 L768.9 84.2 Q767.5 85.6 766.1 84.2 Z" fill="#fd931f"/>
<circle cx="767.6" cy="89.6" r="2.35" fill="#fd931f"/>
</svg>
</body></html>
